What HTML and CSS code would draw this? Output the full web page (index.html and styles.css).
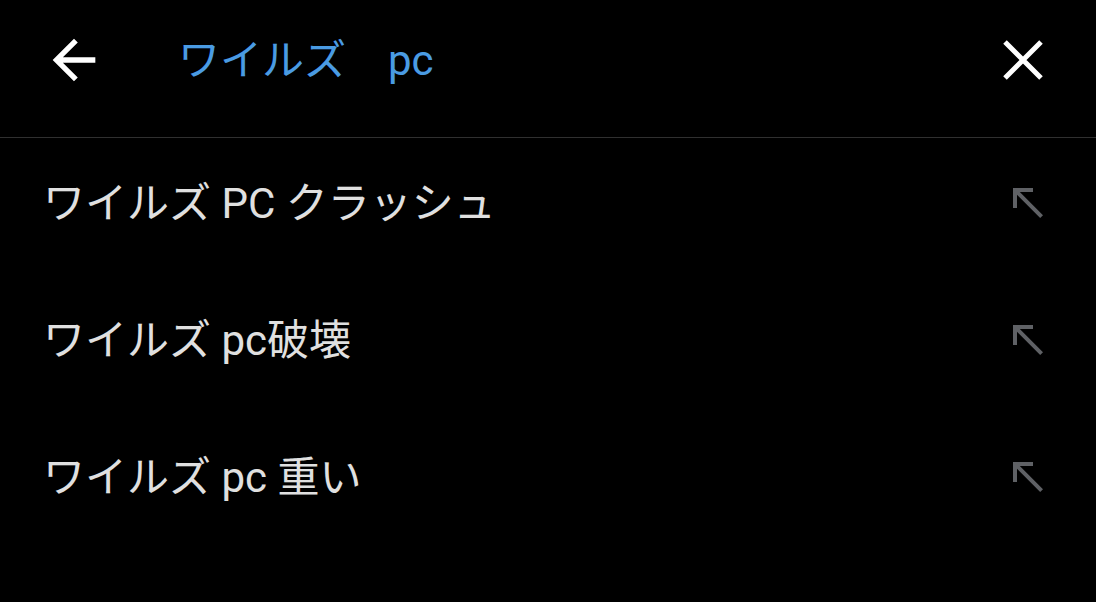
FILE: index.html
```html
<!DOCTYPE html>
<html lang="ja">
<head>
    <meta charset="UTF-8">
    <meta name="viewport" content="width=device-width, initial-scale=1.0">
    <title>Search</title>
    <link rel="stylesheet" href="styles.css">
</head>
<body>
    <div class="search-page">
        <header class="search-bar">
            <svg class="back-icon" viewBox="0 0 24 24">
                <path d="M20 11H7.83l5.59-5.59L12 4l-8 8 8 8 1.41-1.41L7.83 13H20v-2z"/>
            </svg>
            <div class="query">ワイルズ　pc</div>
            <svg class="close-icon" viewBox="0 0 48 48">
                <path d="M6 6L42 42M42 6L6 42"/>
            </svg>
        </header>
        <ul class="suggestions">
            <li class="suggestion">
                <span class="text">ワイルズ PC クラッシュ</span>
                <svg class="fill-icon" viewBox="0 0 24 24"><path d="M5 15h2V8.41L18.59 20 20 18.59 8.41 7H15V5H5z"/></svg>
            </li>
            <li class="suggestion">
                <span class="text">ワイルズ pc破壊</span>
                <svg class="fill-icon" viewBox="0 0 24 24"><path d="M5 15h2V8.41L18.59 20 20 18.59 8.41 7H15V5H5z"/></svg>
            </li>
            <li class="suggestion">
                <span class="text">ワイルズ pc 重い</span>
                <svg class="fill-icon" viewBox="0 0 24 24"><path d="M5 15h2V8.41L18.59 20 20 18.59 8.41 7H15V5H5z"/></svg>
            </li>
        </ul>
    </div>
</body>
</html>
```

FILE: styles.css
```css
* { margin: 0; padding: 0; box-sizing: border-box; }

body {
    background: #000;
    font-family: Roboto, "Noto Sans CJK JP", sans-serif;
    width: 1096px;
    height: 602px;
    overflow: hidden;
}

.search-bar {
    display: flex;
    align-items: center;
    height: 138px;
    padding: 0 49px 18px 42px;
    border-bottom: 1px solid #303030;
}

.back-icon {
    width: 64px;
    height: 64px;
    fill: #fff;
}

.query {
    flex: 1;
    margin: 0 0 6px 72px;
    font-size: 42px;
    color: #4a9be3;
}

.close-icon {
    width: 48px;
    height: 48px;
    stroke: #fff;
    stroke-width: 5;
    fill: none;
}

.suggestions { list-style: none; }

.suggestion {
    display: flex;
    align-items: center;
    height: 137px;
    padding: 0 45px 14px 43px;
}

.suggestion .text {
    flex: 1;
    font-size: 42px;
    color: #e0e0e0;
}

.fill-icon {
    width: 48px;
    height: 48px;
    margin-top: 4px;
    fill: #5f6165;
}
```
